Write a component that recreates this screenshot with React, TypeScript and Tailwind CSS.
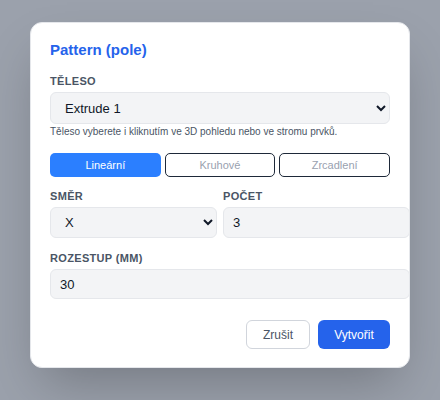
import React from 'react';

const segments = ['Lineární', 'Kruhové', 'Zrcadlení'];

export default function App() {
  const active = 'Lineární';

  return (
    <div
      className="w-[440px] h-[400px] bg-[#9ba1ac] overflow-hidden pt-[22px] pl-[30px]"
      style={{ fontFamily: '"Liberation Sans", Arial, sans-serif' }}
    >
      {/* dialog */}
      <div className="w-[380px] bg-white rounded-xl border border-gray-200 shadow-2xl p-[19px] pb-[18px]">
        <h2 className="text-[15px] leading-[15px] font-bold text-[#2563eb] mb-[17px]">Pattern (pole)</h2>

        <label className="block text-[11px] leading-[14px] font-bold tracking-[0.03em] text-gray-600 uppercase mb-1">
          Těleso
        </label>
        <select className="w-full h-8 pl-[10px] pr-1 text-[13px] text-gray-900 bg-gray-100 border border-gray-200 rounded-md">
          <option>Extrude 1</option>
        </select>
        <p className="mt-[2px] text-[10px] leading-3 text-gray-600">
          Těleso vyberete i kliknutím ve 3D pohledu nebo ve stromu prvků.
        </p>

        {/* typ pole */}
        <div className="grid grid-cols-3 gap-1 mt-[15px]">
          {segments.map((s) => (
            <button
              key={s}
              className={`h-6 rounded-[5px] text-[11px] ${
                s === active
                  ? 'bg-blue-500 text-white'
                  : 'bg-white border border-gray-800 text-gray-400'
              }`}
            >
              {s}
            </button>
          ))}
        </div>

        <div className="grid grid-cols-2 gap-[6px] mt-3">
          <div>
            <label className="block text-[11px] leading-[14px] font-bold tracking-[0.03em] text-gray-600 uppercase mb-1">
              Směr
            </label>
            <select className="w-full h-[31px] pl-[10px] pr-1 text-[13px] text-gray-900 bg-gray-100 border border-gray-200 rounded-md">
              <option>X</option>
              <option>Y</option>
              <option>Z</option>
            </select>
          </div>
          <div>
            <label className="block text-[11px] leading-[14px] font-bold tracking-[0.03em] text-gray-600 uppercase mb-1">
              Počet
            </label>
            <input
              type="text"
              defaultValue="3"
              className="box-content w-full h-[29px] px-[9px] text-[13px] text-gray-900 bg-gray-100 border border-gray-200 rounded-md outline-none"
            />
          </div>
        </div>

        <label className="block mt-[13px] text-[11px] leading-[14px] font-bold tracking-[0.03em] text-gray-600 uppercase mb-1">
          Rozestup (mm)
        </label>
        <input
          type="text"
          defaultValue="30"
          className="box-content w-full h-[28px] px-[9px] text-[13px] text-gray-900 bg-gray-100 border border-gray-200 rounded-md outline-none"
        />

        <div className="flex justify-end gap-2 mt-[21px]">
          <button className="w-16 h-[29px] rounded-md border border-gray-300 bg-white text-[12px] text-gray-600">
            Zrušit
          </button>
          <button className="w-[72px] h-[29px] rounded-md bg-[#2563eb] text-[12px] text-white">
            Vytvořit
          </button>
        </div>
      </div>
    </div>
  );
}
